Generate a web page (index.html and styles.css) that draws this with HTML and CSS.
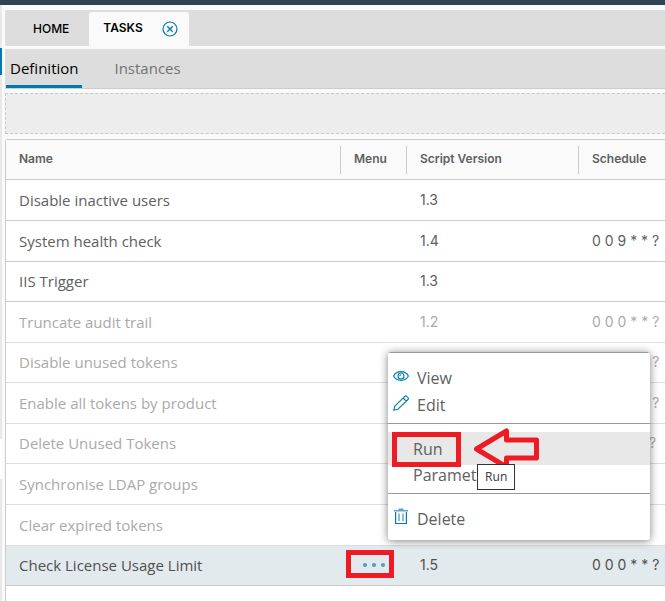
FILE: index.html
```html
<!DOCTYPE html>
<html lang="en">
<head>
<meta charset="utf-8">
<title>Tasks</title>
<link rel="stylesheet" href="styles.css">
</head>
<body>
<div class="topbar"></div>
<div class="shell">
  <aside class="rail"><span class="rail-active"></span><span class="rail-gap"></span></aside>
  <main class="content">
    <nav class="tabs">
      <a class="tab" href="#home">HOME</a>
      <div class="tab tab-open">
        <a href="#tasks">TASKS</a>
        <button class="close" type="button" aria-label="Close tab">
          <svg width="16" height="16" viewBox="0 0 16 16" fill="none" stroke="#0079ad"><circle cx="8" cy="8" r="7" stroke-width="1.2"/><path d="M5.3 5.3l5.4 5.4M10.7 5.3l-5.4 5.4" stroke-width="1.3"/></svg>
        </button>
      </div>
    </nav>
    <nav class="subnav">
      <a class="sub sub-on" href="#definition">Definition</a>
      <a class="sub" href="#instances">Instances</a>
    </nav>
    <div class="group-drop"></div>
    <div class="grid">
      <table>
        <colgroup><col class="c-name"><col class="c-menu"><col class="c-ver"><col></colgroup>
        <thead><tr><th><span>Name</span></th><th><span>Menu</span></th><th><span>Script Version</span></th><th><span>Schedule</span></th></tr></thead>
        <tbody>
          <tr><td>Disable inactive users</td><td></td><td class="num">1.3</td><td></td></tr>
          <tr><td>System health check</td><td></td><td class="num">1.4</td><td class="num">0 0 9 * * ?</td></tr>
          <tr><td>IIS Trigger</td><td></td><td class="num">1.3</td><td></td></tr>
          <tr class="off"><td>Truncate audit trail</td><td></td><td class="num">1.2</td><td class="num">0 0 0 * * ?</td></tr>
          <tr class="off"><td>Disable unused tokens</td><td></td><td></td><td class="num">0 0 0 * * ?</td></tr>
          <tr class="off"><td>Enable all tokens by product</td><td></td><td></td><td class="num">0 0 0 * * ?</td></tr>
          <tr class="off"><td>Delete Unused Tokens</td><td></td><td></td><td class="num">0 0 1 * * ?</td></tr>
          <tr class="off"><td>Synchronise LDAP groups</td><td></td><td></td><td></td></tr>
          <tr class="off"><td>Clear expired tokens</td><td></td><td></td><td></td></tr>
          <tr class="picked"><td>Check License Usage Limit</td><td class="more-cell"><button class="more" type="button" aria-label="Row menu"><svg width="24" height="6" viewBox="0 0 24 6" fill="#4d9fc6"><circle cx="3" cy="3" r="2.1"/><circle cx="12" cy="3" r="2.1"/><circle cx="21" cy="3" r="2.1"/></svg></button></td><td class="num">1.5</td><td class="num">0 0 0 * * ?</td></tr>
        </tbody>
      </table>
    </div>
  </main>
</div>

<div class="menu">
  <div class="section">
    <button class="item" type="button"><svg width="16" height="16" viewBox="0 0 16 16" fill="none" stroke="#0079ad" stroke-width="1.1"><path d="M.6 8C3.6 2.2 12.4 2.2 15.4 8C12.4 13.8 3.6 13.8 .6 8Z"/><circle cx="8" cy="8" r="3"/><path d="M6.8 8.2q0-1.4 1.5-1.5"/></svg>View</button>
    <button class="item" type="button"><svg width="16" height="16" viewBox="0 0 16 16" fill="none" stroke="#0079ad" stroke-width="1.1" stroke-linejoin="round"><path d="M.8 15.2L1.8 11.2L11.8 1.3Q12.7 .5 13.6 1.3L15 2.7Q15.8 3.6 15 4.5L5 14.2ZM10.1 3L13.3 6.2"/></svg>Edit</button>
  </div>
  <div class="section">
    <button class="item item-text item-hover" type="button">Run</button>
    <button class="item item-text item-last" type="button">Paramet</button>
  </div>
  <div class="section">
    <button class="item item-delete" type="button"><svg width="16" height="17" viewBox="0 0 16 17" fill="none" stroke="#0079ad" stroke-width="1.2"><path d="M2.6 4V15.5H13.4V4"/><path d="M1 2.8H15M5.5 1.2H10.5" stroke="#5ba5c8" stroke-width="1.6"/><path d="M6 5.5V13M10 5.5V13" stroke="#8dbfd8" stroke-width="2"/></svg>Delete</button>
  </div>
</div>
<div class="mark mark-run"></div>
<div class="mark mark-more"></div>
<svg class="arrow" width="66" height="42" viewBox="0 0 66 42" fill="none" stroke="#ed1c24" stroke-width="5" stroke-linejoin="round"><path d="M3.5 21L33.5 3V12H63.5V30H33.5V39Z"/></svg>
<div class="tip" role="tooltip">Run</div>
</body>
</html>
```
FILE: styles.css
```css
* { box-sizing: border-box; }
body {
  margin: 0;
  min-height: 100vh;
  display: flex;
  flex-direction: column;
  position: relative;
  overflow: hidden;
  background: #fafafa;
  color: #606060;
  font: 15px/20px "Open Sans", sans-serif;
}
a { color: inherit; text-decoration: none; }
button { font: inherit; color: inherit; border: 0; padding: 0; background: none; }
svg { display: block; }

.topbar { height: 5px; background: #314351; }
.shell { display: flex; flex: 1; }
.rail {
  width: 2px;
  margin-right: 3px;
  background: #e8e8e8;
  padding-top: 43px;
}
.rail-active { display: block; height: 27px; background: #0079ad; }
.rail-gap { display: block; height: 40px; margin-top: 364px; background: #fff; }
.content { flex: 1; min-width: 0; display: flex; flex-direction: column; }

.tabs {
  display: flex;
  margin-top: 5px;
  height: 36px;
  padding-top: 2px;
  background: #ddd;
  color: #000;
  font: 500 12px/20px Inter, sans-serif;
}
.tab { display: flex; align-items: center; padding: 0 20px 0 28px; }
.tab-open {
  gap: 19px;
  padding: 0 11px 0 14px;
  background: #fafafa;
  border-radius: 3px 3px 0 0;
}
.tab-open a { padding-bottom: 2px; font-weight: 600; }

.subnav {
  display: flex;
  gap: 28px;
  margin-top: 3px;
  height: 40px;
  padding-left: 1px;
  background: #ddd;
  border-bottom: 1px solid #ccc;
}
.sub { display: flex; align-items: center; padding: 2px 4px 0; color: #737373; border-bottom: 3px solid transparent; }
.sub-on { color: #000; border-color: #0079ad; }

.group-drop { height: 41px; margin-top: 4px; background: #ededed; border: 1px dashed #c8c8c8; border-right: 0; }

.grid {
  flex: 1;
  margin-top: 5px;
  background: #fff;
  border: 1px solid #ccc;
  border-width: 1px 0 0 1px;
  border-radius: 3px 0 0 0;
}
table { width: 100%; table-layout: fixed; border-collapse: separate; border-spacing: 0; }
.c-name { width: 335px; }
.c-menu { width: 66px; }
.c-ver { width: 172px; }
th, td { padding: 0 0 1px 13px; border-bottom: 1px solid #ccc; text-align: left; white-space: nowrap; }
th { height: 40px; padding: 0; background: #fafafa; font: 600 12px/20px Inter, sans-serif; }
th span { display: block; height: 28px; padding-left: 13px; line-height: 26px; border-right: 1px solid #ccc; }
th:last-child span { border: 0; }
td { height: 40px; }
tr:nth-child(even) td, tr:nth-child(8n+1) td { height: 41px; }
tbody tr:nth-child(10) td { height: 40px; }
.off td { color: #aaa; border-color: #ddd; }
.picked td { background: #e3eaed; color: #505050; }
td.more-cell { padding-left: 21px; }
.more { display: block; }
.num { font-family: Inter, sans-serif; font-size: 14px; }

.menu {
  position: absolute;
  left: 388px;
  top: 352px;
  width: 262px;
  background: #fff;
  border-radius: 3px;
  box-shadow: 0 1px 8px rgba(0, 0, 0, .5);
  overflow: hidden;
  font-size: 16px;
}
.section { display: flex; flex-direction: column; border-top: 1px solid #999; padding-top: 8px; }
.item { display: flex; align-items: center; gap: 8px; height: 27px; padding-left: 5px; text-align: left; }
.section:first-child { padding: 11px 0 5px; }
.item svg { margin-bottom: 4px; }
.item-text { padding-left: 25px; }
.item-hover { height: 33px; background: #e8e8e8; }
.item-last { height: 20px; margin-bottom: 8px; }
.item-delete { height: 33px; margin-bottom: 5px; }

.mark { position: absolute; border: 5px solid #ed1c24; }
.mark-run { left: 392px; top: 432px; width: 69px; height: 35px; }
.mark-more { left: 346px; top: 550px; width: 48px; height: 28px; }
.arrow { position: absolute; left: 473px; top: 428px; }
.tip {
  position: absolute;
  left: 477px;
  top: 464px;
  padding: 1px 7px;
  background: #fff;
  border: 1px solid #333;
  color: #444;
  font: 12px/22px "Noto Sans", sans-serif;
}
```
